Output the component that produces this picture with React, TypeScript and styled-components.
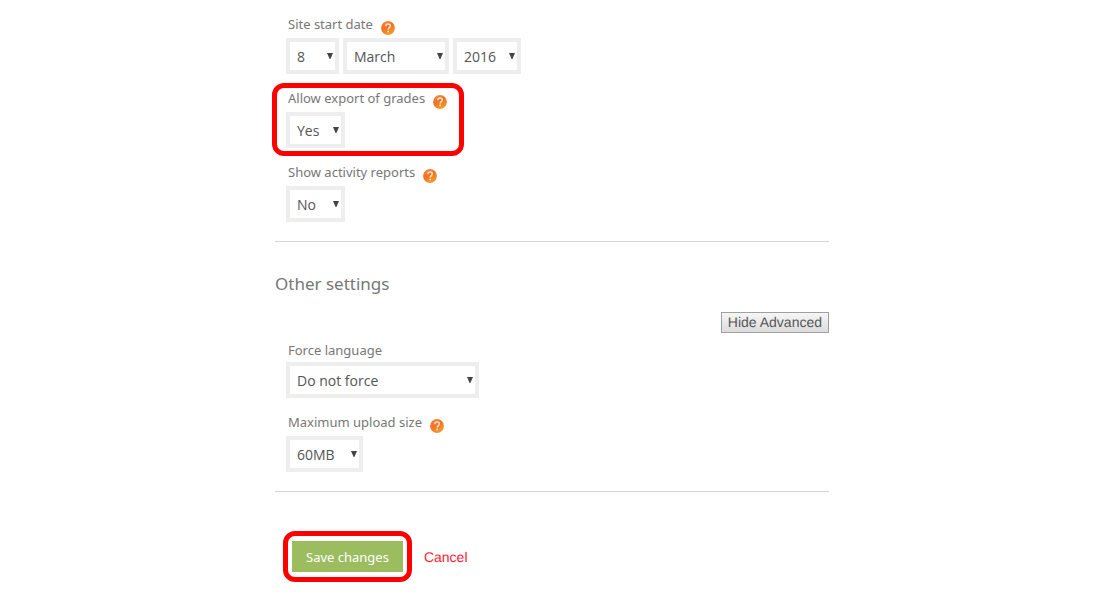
import React from "react";
import styled, { createGlobalStyle } from "styled-components";

const GlobalStyle = createGlobalStyle`
  * { box-sizing: border-box; }
  body {
    margin: 0;
    background: #fff;
    color: #777;
    font-family: "Noto Sans", "Open Sans", sans-serif;
    font-size: 13px;
  }
`;

const Form = styled.form`
  padding: 10px 289px 16px 275px;
`;

const Section = styled.section`
  padding-bottom: 19px;
  border-bottom: 1px solid #d4d4d4;
`;

const Fields = styled.div`
  display: flex;
  flex-direction: column;
  align-items: flex-start;
  gap: 10px;
  padding-left: 11px;
`;

const Field = styled.div`
  position: relative;
`;

const LabelRow = styled.div<{ $compact?: boolean }>`
  display: flex;
  align-items: flex-start;
  gap: 8px;
  height: ${(p) => (p.$compact ? 24 : 28)}px;
  padding: ${(p) => (p.$compact ? 2 : 4)}px 0 0 2px;
  line-height: 20px;
  white-space: nowrap;
`;

const HelpButton = styled.button`
  display: block;
  margin-top: 7px;
  padding: 0;
  border: 0;
  background: none;
  line-height: 0;
  cursor: pointer;
`;

const Controls = styled.div`
  display: flex;
  gap: 4px;
`;

const SelectBox = styled.span<{ $width: number }>`
  display: grid;
  grid-template-columns: 1fr;
  align-items: center;
  width: ${(p) => p.$width}px;
`;

const Select = styled.select`
  grid-area: 1 / 1;
  appearance: none;
  width: 100%;
  height: 36px;
  padding: 0 0 0 7px;
  border: 4px solid #eee;
  border-radius: 0;
  background: #fff;
  color: #555;
  font: 14px "Open Sans", "Noto Sans", sans-serif;
`;

const Arrow = styled.svg`
  grid-area: 1 / 1;
  justify-self: end;
  margin: 0 6px 0 0;
  pointer-events: none;
`;

const Highlight = styled.span<{ $inset: string }>`
  position: absolute;
  inset: ${(p) => p.$inset};
  border: 5px solid #f00;
  border-radius: 12px;
  pointer-events: none;
`;

const Heading = styled.h2`
  margin: 0;
  padding-top: 30px;
  font-size: 17px;
  font-weight: 400;
  line-height: 24px;
`;

const AdvancedRow = styled.div`
  display: flex;
  justify-content: flex-end;
  padding: 16px 0 5px;
`;

const AdvancedButton = styled.button`
  height: 21px;
  padding: 0 6px;
  border: 1px solid #a0a0a0;
  border-radius: 0;
  background: linear-gradient(#f6f6f6, #dcdcdc);
  color: #555;
  font: 14px/19px "Liberation Sans", Arial, sans-serif;
  text-rendering: geometricPrecision;
`;

const Actions = styled.div`
  display: flex;
  align-items: center;
  gap: 21px;
  padding: 49px 0 0 17px;
`;

const SaveWrap = styled.div`
  position: relative;
`;

const SaveButton = styled.button`
  display: block;
  height: 31px;
  padding: 0 14px;
  border: 0;
  background: #9bbd5f;
  color: #fff;
  font: inherit;
`;

const CancelLink = styled.a`
  color: #ff1a35;
  font-family: "Liberation Sans", Arial, sans-serif;
  font-size: 14px;
  text-decoration: none;
  text-rendering: geometricPrecision;
`;

function Help({ topic }: { topic: string }) {
  return (
    <HelpButton type="button" aria-label={`Help with ${topic}`}>
      <svg width="14" height="14" viewBox="0 0 14 14" aria-hidden="true">
        <defs>
          <linearGradient id="orb" x1="0" y1="0" x2="0.5" y2="1">
            <stop offset="0" stopColor="#ff8a50" />
            <stop offset="0.5" stopColor="#f3701f" />
            <stop offset="1" stopColor="#f09a2c" />
          </linearGradient>
        </defs>
        <circle cx="7" cy="7" r="6.9" fill="url(#orb)" />
        <path
          d="M4.8 5.3C4.8 3.8 5.8 3.1 7.1 3.1S9.3 3.9 9.3 5.1C9.3 6.6 7.2 6.8 7.2 8.5"
          fill="none"
          stroke="#ffe3d0"
          strokeWidth="1.5"
        />
        <circle cx="7.1" cy="10.5" r="0.9" fill="#ffe3d0" />
      </svg>
    </HelpButton>
  );
}

interface DropdownProps {
  id: string;
  width: number;
  options: string[];
  value: string;
  label?: string;
}

function Dropdown({ id, width, options, value, label }: DropdownProps) {
  return (
    <SelectBox $width={width}>
      <Select id={id} defaultValue={value} aria-label={label}>
        {options.map((o) => (
          <option key={o}>{o}</option>
        ))}
      </Select>
      <Arrow width="6" height="6" viewBox="0 0 6 6" aria-hidden="true">
        <path d="M0 0H6L3.4 6H2.6Z" fill="#444" />
      </Arrow>
    </SelectBox>
  );
}

const days = Array.from({ length: 31 }, (_, i) => String(i + 1));
const months = [
  "January", "February", "March", "April", "May", "June", "July",
  "August", "September", "October", "November", "December",
];

export default function App() {
  return (
    <>
      <GlobalStyle />
      <Form onSubmit={(e: React.FormEvent) => e.preventDefault()}>
        <Section>
          <Fields>
            <Field>
              <LabelRow>
                <label htmlFor="day">Site start date</label>
                <Help topic="Site start date" />
              </LabelRow>
              <Controls>
                <Dropdown id="day" width={53} options={days} value="8" />
                <Dropdown id="month" width={106} options={months} value="March" label="Month" />
                <Dropdown id="year" width={68} options={["2015", "2016", "2017"]} value="2016" label="Year" />
              </Controls>
            </Field>
            <Field>
              <LabelRow>
                <label htmlFor="grades">Allow export of grades</label>
                <Help topic="Allow export of grades" />
              </LabelRow>
              <Dropdown id="grades" width={59} options={["Yes", "No"]} value="Yes" />
              <Highlight $inset="-1px -17px -8px -14px" />
            </Field>
            <Field>
              <LabelRow>
                <label htmlFor="reports">Show activity reports</label>
                <Help topic="Show activity reports" />
              </LabelRow>
              <Dropdown id="reports" width={59} options={["Yes", "No"]} value="No" />
            </Field>
          </Fields>
        </Section>
        <Section>
          <Heading>Other settings</Heading>
          <AdvancedRow>
            <AdvancedButton type="button">Hide Advanced</AdvancedButton>
          </AdvancedRow>
          <Fields>
            <Field>
              <LabelRow $compact>
                <label htmlFor="language">Force language</label>
              </LabelRow>
              <Dropdown id="language" width={193} options={["Do not force", "English"]} value="Do not force" />
            </Field>
            <Field>
              <LabelRow>
                <label htmlFor="upload">Maximum upload size</label>
                <Help topic="Maximum upload size" />
              </LabelRow>
              <Dropdown id="upload" width={77} options={["20MB", "60MB"]} value="60MB" />
            </Field>
          </Fields>
        </Section>
        <Actions>
          <SaveWrap>
            <SaveButton type="submit">Save changes</SaveButton>
            <Highlight $inset="-10px -9px" />
          </SaveWrap>
          <CancelLink href="#cancel">Cancel</CancelLink>
        </Actions>
      </Form>
    </>
  );
}
